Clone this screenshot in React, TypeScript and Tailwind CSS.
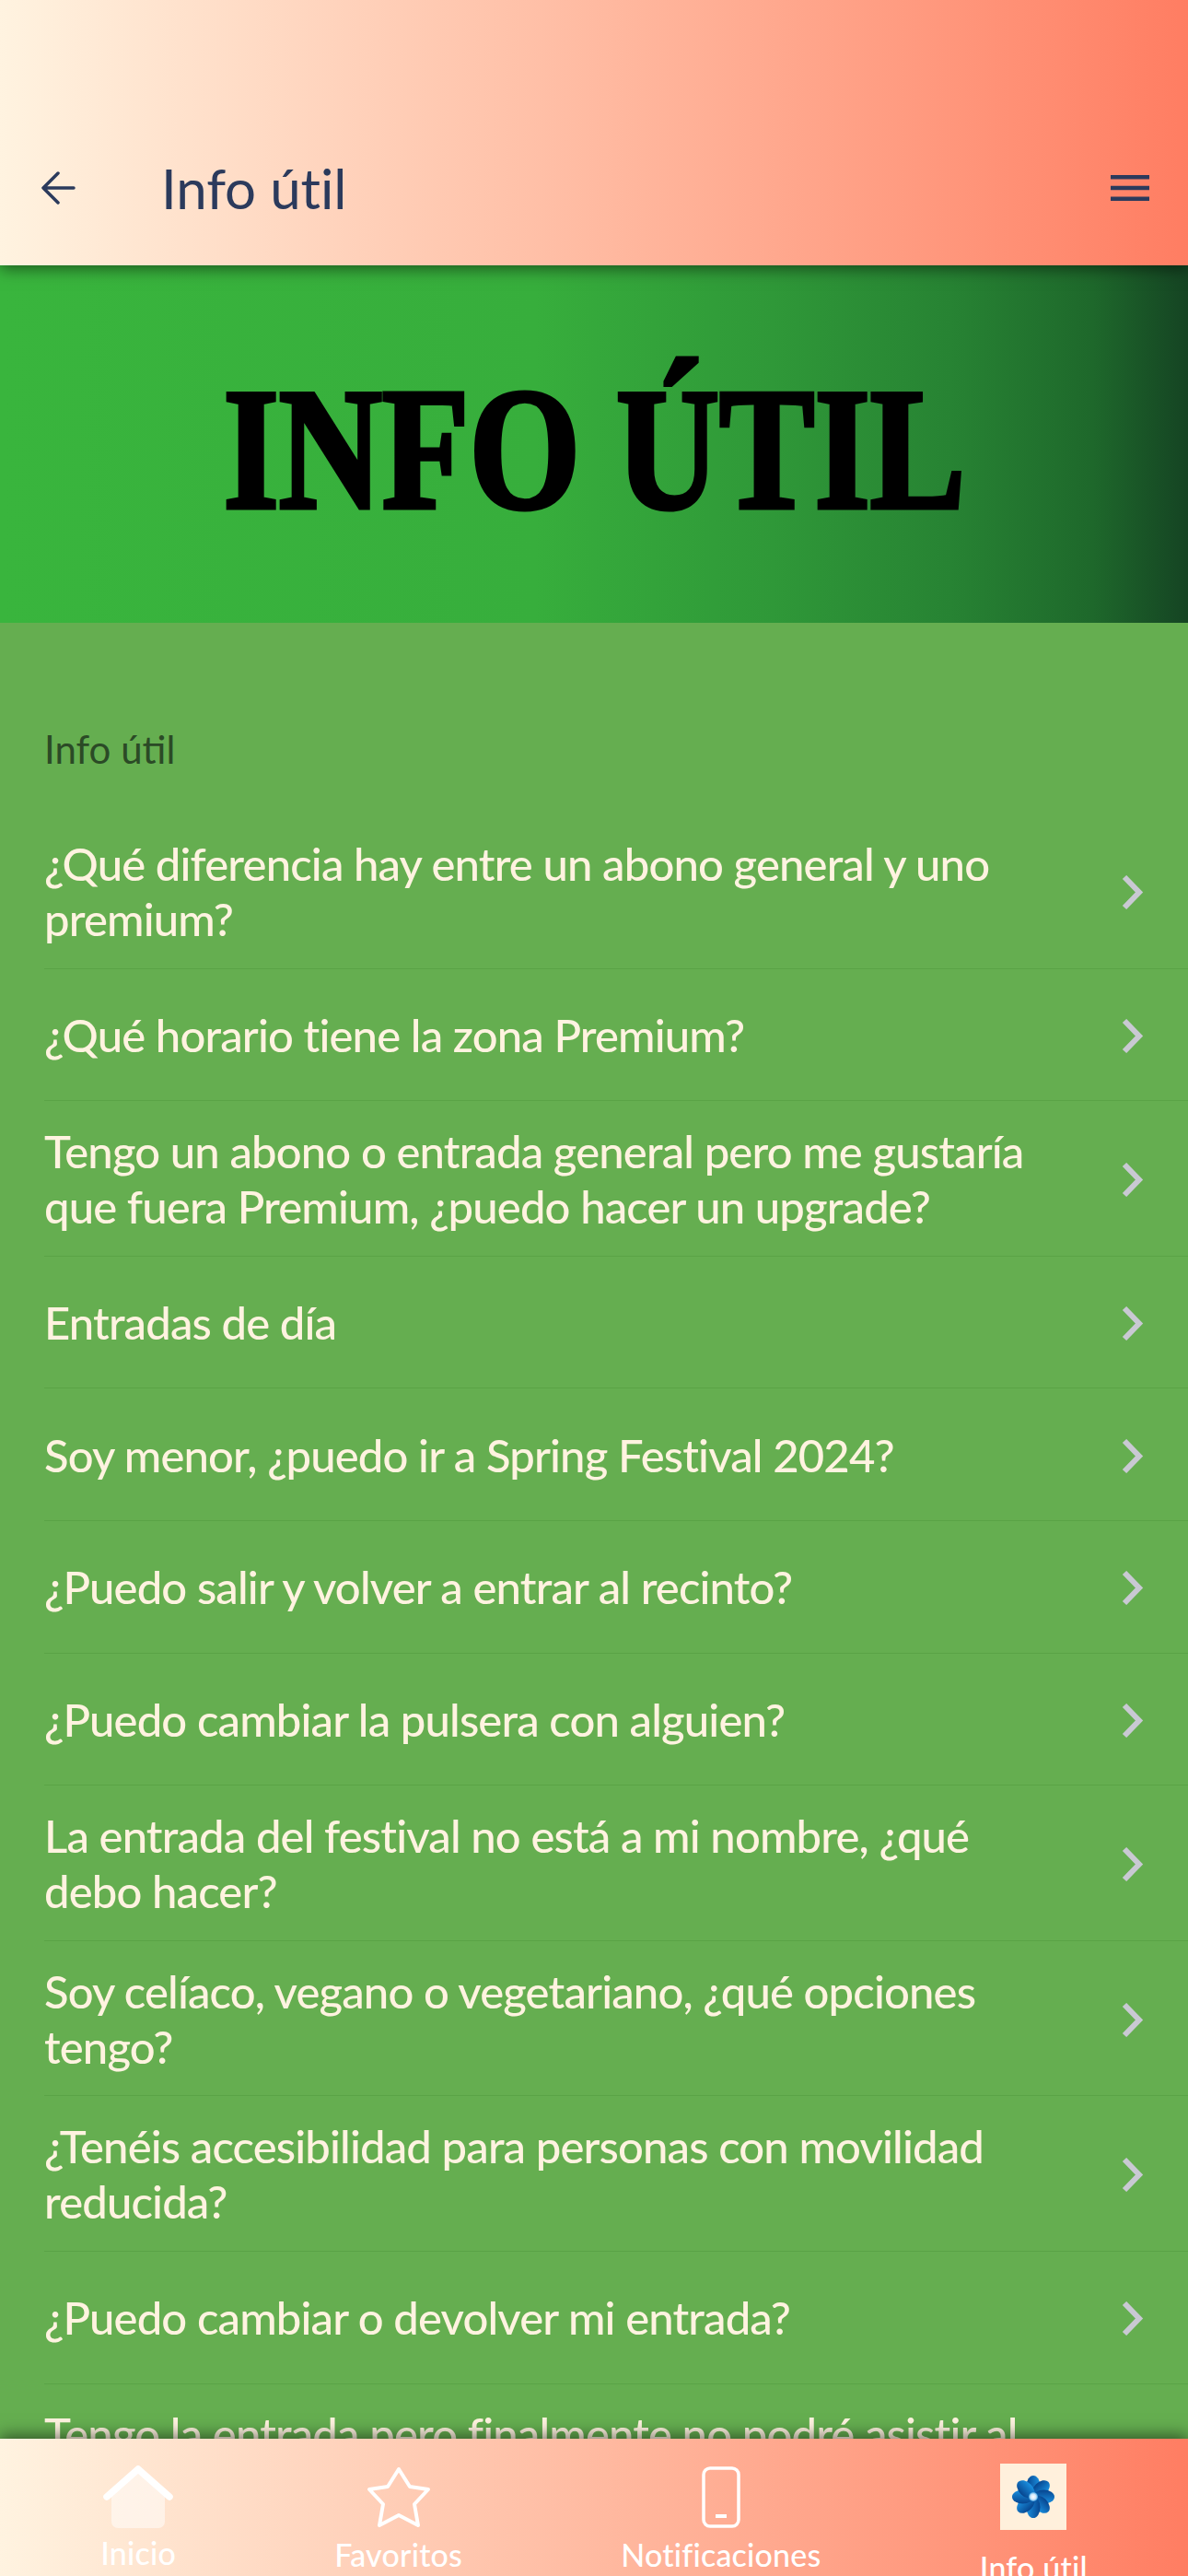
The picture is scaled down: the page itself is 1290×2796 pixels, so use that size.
const questions = [
  "¿Qué diferencia hay entre un abono general y uno premium?",
  "¿Qué horario tiene la zona Premium?",
  "Tengo un abono o entrada general pero me gustaría que fuera Premium, ¿puedo hacer un upgrade?",
  "Entradas de día",
  "Soy menor, ¿puedo ir a Spring Festival 2024?",
  "¿Puedo salir y volver a entrar al recinto?",
  "¿Puedo cambiar la pulsera con alguien?",
  "La entrada del festival no está a mi nombre, ¿qué debo hacer?",
  "Soy celíaco, vegano o vegetariano, ¿qué opciones tengo?",
  "¿Tenéis accesibilidad para personas con movilidad reducida?",
  "¿Puedo cambiar o devolver mi entrada?",
  "Tengo la entrada pero finalmente no podré asistir al festival, ¿qué puedo hacer?",
];

const petals = [0, 45, 90, 135, 180, 225, 270, 315];

function Flower() {
  return (
    <div className="flex h-[72px] w-[72px] items-center justify-center bg-[#fff0dc]">
      <svg viewBox="0 0 48 48" className="h-[48px] w-[48px]">
        <defs>
          <linearGradient id="petal" x1="0" y1="0" x2="1" y2="0">
            <stop offset="0" stopColor="#07458f" />
            <stop offset="1" stopColor="#1a90e0" />
          </linearGradient>
          <radialGradient id="core">
            <stop offset="0" stopColor="#ffffff" />
            <stop offset="0.6" stopColor="#cfe8fb" />
            <stop offset="1" stopColor="#3d9ee0" />
          </radialGradient>
        </defs>
        {petals.map((deg) => (
          <ellipse
            key={deg}
            cx="24"
            cy="12.500"
            rx="7.500"
            ry="11.500"
            fill="url(#petal)"
            transform={`rotate(${deg} 24 24)`}
          />
        ))}
        <circle cx="24" cy="24" r="5" fill="url(#core)" />
      </svg>
    </div>
  );
}

function NavItem({ label, icon, labelClass }: { label: string; icon: React.ReactNode; labelClass: string }) {
  return (
    <div className="flex flex-col items-center">
      <div className="flex h-[72px] items-center justify-center">{icon}</div>
      <span className={`text-[34px] font-medium leading-[40px] tracking-[0.2px] text-white ${labelClass}`}>{label}</span>
    </div>
  );
}

export default function App() {
  return (
    <div className="flex h-[2796px] w-[1290px] flex-col overflow-hidden bg-[#65ae50] font-['Lato',sans-serif]">
      <header className="relative z-10 flex h-[288px] shrink-0 items-end justify-between bg-gradient-to-r from-[#fff3e0] to-[#ff7d62] pb-[48px] pl-[44px] pr-[42px] text-[#2b3a5c] shadow-[0_4px_16px_rgba(0,0,0,0.5)]">
        <div className="flex items-center">
          <svg viewBox="0 0 38 36" className="h-[36px] w-[38px]" fill="none" stroke="currentColor" strokeWidth="3.500" strokeLinecap="round" strokeLinejoin="round">
            <path d="M36 18H3M19 2L3 18l16 16" />
          </svg>
          <h1 className="ml-[93px] text-[60px] leading-[72px] tracking-[-0.1px]">Info útil</h1>
        </div>
        <svg viewBox="0 0 42 28" className="mb-[22px] h-[28px] w-[42px]" fill="currentColor">
          <path d="M0 0h42v4.500H0zM0 11.800h42v4.500H0zM0 23.500h42V28H0z" />
        </svg>
      </header>

      <section className="flex h-[388px] shrink-0 items-center justify-center bg-[linear-gradient(to_right,#39b53d_0%,#37ae3c_45%,#2f9838_65%,#278333_80%,#1e682b_92%,#154423_100%)]">
        <h2 className="scale-x-[0.825] whitespace-nowrap pt-[12px] font-['Liberation_Serif',serif] text-[188px] font-bold leading-none text-black [-webkit-text-stroke:5px_black]">
          INFO ÚTIL
        </h2>
      </section>

      <main className="min-h-0 flex-1 overflow-hidden">
        <p className="pb-[45px] pl-[48px] pt-[112px] text-[42px] leading-[50px] text-[#2b4a26]">Info útil</p>
        <ul className="pl-[48px]">
          {questions.map((q) => (
            <li
              key={q}
              className="flex min-h-[143.6px] items-center border-b border-[#5aa346] py-[23.8px] pr-[48px]"
            >
              <span className="flex-1 pr-[70px] text-[49px] font-medium leading-[60px] tracking-[-0.85px] text-[#fff3e0]">{q}</span>
              <svg viewBox="0 0 24 37" className="mt-[3px] h-[37px] w-[24px] shrink-0" fill="none" stroke="#c9c9d3" strokeWidth="6">
                <path d="M3 2l16 16.500L3 35" />
              </svg>
            </li>
          ))}
        </ul>
      </main>

      <nav className="relative z-10 flex h-[149px] shrink-0 items-start justify-around overflow-hidden bg-gradient-to-r from-[#fff3e0] to-[#ff7d62] px-[23px] pt-[27px] shadow-[0_-4px_16px_rgba(0,0,0,0.5)]">
        <NavItem
          label="Inicio"
          labelClass="mt-[5px]"
          icon={
            <svg viewBox="0 0 76 68" className="h-[68px] w-[76px]" fill="none">
              <path d="M9 32L38 8l29 24v29a7 7 0 0 1-7 7H16a7 7 0 0 1-7-7z" fill="#ffffff" fillOpacity="0.5" />
              <path d="M4 34L38 4l34 30" stroke="#ffffff" strokeWidth="7.500" strokeLinecap="round" strokeLinejoin="round" />
            </svg>
          }
        />
        <NavItem
          label="Favoritos"
          labelClass="mt-[7px]"
          icon={
            <svg viewBox="0 0 70 67" className="h-[67px] w-[70px]" fill="none" stroke="#ffffff" strokeWidth="4" strokeLinejoin="round">
              <path d="M35 3l12 19 20 3-15 16 4 23-21-11-21 11 4-23L3 25l20-3z" />
            </svg>
          }
        />
        <NavItem
          label="Notificaciones"
          labelClass="mt-[7px]"
          icon={
            <svg viewBox="0 0 42 67" className="h-[67px] w-[42px]" fill="none" stroke="#ffffff" strokeWidth="3.500">
              <rect x="2" y="2" width="38" height="63" rx="7" />
              <path d="M15 54h12" strokeWidth="4" />
            </svg>
          }
        />
        <NavItem label="Info útil" labelClass="mt-[21px]" icon={<Flower />} />
      </nav>
    </div>
  );
}
